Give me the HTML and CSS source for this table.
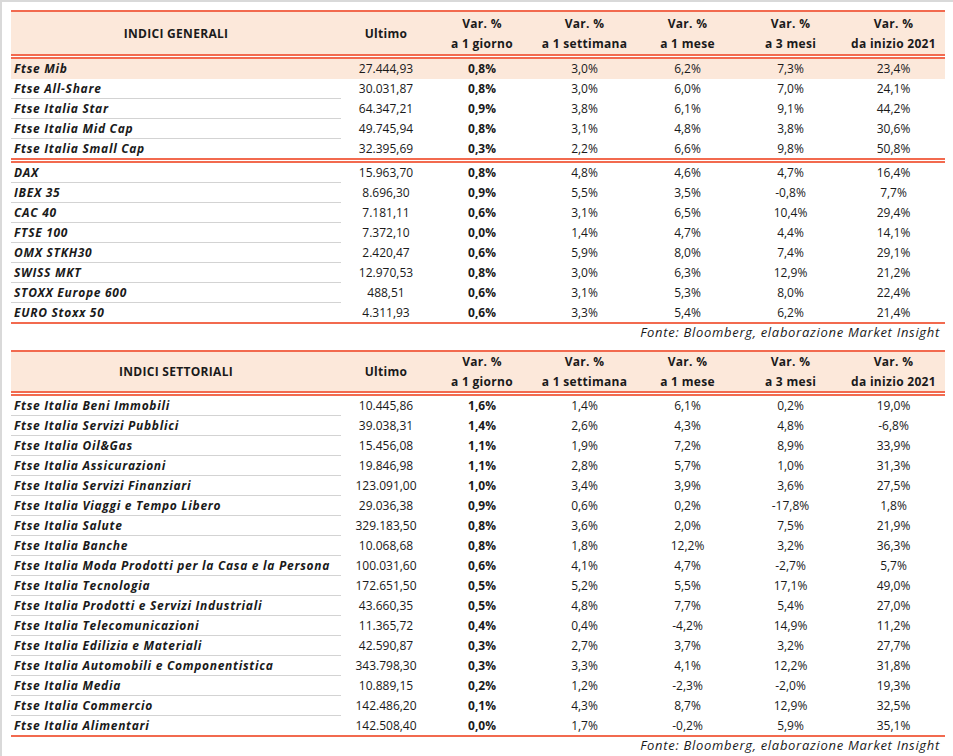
FILE: index.html
```html
<!DOCTYPE html>
<html lang="it">
<head>
<meta charset="utf-8">
<title>Indici</title>
<link rel="stylesheet" href="styles.css">
</head>
<body>
<div class="page">
<table class="tbl">
<colgroup><col class="c-name"><col class="c-last"><col class="c-day"><col class="c-var"><col class="c-var"><col class="c-var"><col class="c-var"></colgroup>
<thead>
<tr class="head1">
<th class="name-h">INDICI GENERALI</th><th>Ultimo</th><th>Var. %<br>a 1 giorno</th><th>Var. %<br>a 1 settimana</th><th>Var. %<br>a 1 mese</th><th>Var. %<br>a 3 mesi</th><th>Var. %<br>da inizio 2021</th>
</tr>
</thead>
<tbody>
<tr class="hl"><td class="name">Ftse Mib</td><td>27.444,93</td><td class="b">0,8%</td><td>3,0%</td><td>6,2%</td><td>7,3%</td><td>23,4%</td></tr>
<tr><td class="name">Ftse All-Share</td><td>30.031,87</td><td class="b">0,8%</td><td>3,0%</td><td>6,0%</td><td>7,0%</td><td>24,1%</td></tr>
<tr><td class="name">Ftse Italia Star</td><td>64.347,21</td><td class="b">0,9%</td><td>3,8%</td><td>6,1%</td><td>9,1%</td><td>44,2%</td></tr>
<tr><td class="name">Ftse Italia Mid Cap</td><td>49.745,94</td><td class="b">0,8%</td><td>3,1%</td><td>4,8%</td><td>3,8%</td><td>30,6%</td></tr>
<tr class="sep"><td class="name">Ftse Italia Small Cap</td><td>32.395,69</td><td class="b">0,3%</td><td>2,2%</td><td>6,6%</td><td>9,8%</td><td>50,8%</td></tr>
<tr><td class="name">DAX</td><td>15.963,70</td><td class="b">0,8%</td><td>4,8%</td><td>4,6%</td><td>4,7%</td><td>16,4%</td></tr>
<tr><td class="name">IBEX 35</td><td>8.696,30</td><td class="b">0,9%</td><td>5,5%</td><td>3,5%</td><td>-0,8%</td><td>7,7%</td></tr>
<tr><td class="name">CAC 40</td><td>7.181,11</td><td class="b">0,6%</td><td>3,1%</td><td>6,5%</td><td>10,4%</td><td>29,4%</td></tr>
<tr><td class="name">FTSE 100</td><td>7.372,10</td><td class="b">0,0%</td><td>1,4%</td><td>4,7%</td><td>4,4%</td><td>14,1%</td></tr>
<tr><td class="name">OMX STKH30</td><td>2.420,47</td><td class="b">0,6%</td><td>5,9%</td><td>8,0%</td><td>7,4%</td><td>29,1%</td></tr>
<tr><td class="name">SWISS MKT</td><td>12.970,53</td><td class="b">0,8%</td><td>3,0%</td><td>6,3%</td><td>12,9%</td><td>21,2%</td></tr>
<tr><td class="name">STOXX Europe 600</td><td>488,51</td><td class="b">0,6%</td><td>3,1%</td><td>5,3%</td><td>8,0%</td><td>22,4%</td></tr>
<tr class="end"><td class="name">EURO Stoxx 50</td><td>4.311,93</td><td class="b">0,6%</td><td>3,3%</td><td>5,4%</td><td>6,2%</td><td>21,4%</td></tr>
</tbody>
</table>
<p class="note">Fonte: Bloomberg, elaborazione Market Insight</p>

<table class="tbl">
<colgroup><col class="c-name"><col class="c-last"><col class="c-day"><col class="c-var"><col class="c-var"><col class="c-var"><col class="c-var"></colgroup>
<thead>
<tr class="head2">
<th class="name-h">INDICI SETTORIALI</th><th>Ultimo</th><th>Var. %<br>a 1 giorno</th><th>Var. %<br>a 1 settimana</th><th>Var. %<br>a 1 mese</th><th>Var. %<br>a 3 mesi</th><th>Var. %<br>da inizio 2021</th>
</tr>
</thead>
<tbody>
<tr><td class="name">Ftse Italia Beni Immobili</td><td>10.445,86</td><td class="b">1,6%</td><td>1,4%</td><td>6,1%</td><td>0,2%</td><td>19,0%</td></tr>
<tr><td class="name">Ftse Italia Servizi Pubblici</td><td>39.038,31</td><td class="b">1,4%</td><td>2,6%</td><td>4,3%</td><td>4,8%</td><td>-6,8%</td></tr>
<tr><td class="name">Ftse Italia Oil&amp;Gas</td><td>15.456,08</td><td class="b">1,1%</td><td>1,9%</td><td>7,2%</td><td>8,9%</td><td>33,9%</td></tr>
<tr><td class="name">Ftse Italia Assicurazioni</td><td>19.846,98</td><td class="b">1,1%</td><td>2,8%</td><td>5,7%</td><td>1,0%</td><td>31,3%</td></tr>
<tr><td class="name">Ftse Italia Servizi Finanziari</td><td>123.091,00</td><td class="b">1,0%</td><td>3,4%</td><td>3,9%</td><td>3,6%</td><td>27,5%</td></tr>
<tr><td class="name">Ftse Italia Viaggi e Tempo Libero</td><td>29.036,38</td><td class="b">0,9%</td><td>0,6%</td><td>0,2%</td><td>-17,8%</td><td>1,8%</td></tr>
<tr><td class="name">Ftse Italia Salute</td><td>329.183,50</td><td class="b">0,8%</td><td>3,6%</td><td>2,0%</td><td>7,5%</td><td>21,9%</td></tr>
<tr><td class="name">Ftse Italia Banche</td><td>10.068,68</td><td class="b">0,8%</td><td>1,8%</td><td>12,2%</td><td>3,2%</td><td>36,3%</td></tr>
<tr><td class="name">Ftse Italia Moda Prodotti per la Casa e la Persona</td><td>100.031,60</td><td class="b">0,6%</td><td>4,1%</td><td>4,7%</td><td>-2,7%</td><td>5,7%</td></tr>
<tr><td class="name">Ftse Italia Tecnologia</td><td>172.651,50</td><td class="b">0,5%</td><td>5,2%</td><td>5,5%</td><td>17,1%</td><td>49,0%</td></tr>
<tr><td class="name">Ftse Italia Prodotti e Servizi Industriali</td><td>43.660,35</td><td class="b">0,5%</td><td>4,8%</td><td>7,7%</td><td>5,4%</td><td>27,0%</td></tr>
<tr><td class="name">Ftse Italia Telecomunicazioni</td><td>11.365,72</td><td class="b">0,4%</td><td>0,4%</td><td>-4,2%</td><td>14,9%</td><td>11,2%</td></tr>
<tr><td class="name">Ftse Italia Edilizia e Materiali</td><td>42.590,87</td><td class="b">0,3%</td><td>2,7%</td><td>3,7%</td><td>3,2%</td><td>27,7%</td></tr>
<tr><td class="name">Ftse Italia Automobili e Componentistica</td><td>343.798,30</td><td class="b">0,3%</td><td>3,3%</td><td>4,1%</td><td>12,2%</td><td>31,8%</td></tr>
<tr><td class="name">Ftse Italia Media</td><td>10.889,15</td><td class="b">0,2%</td><td>1,2%</td><td>-2,3%</td><td>-2,0%</td><td>19,3%</td></tr>
<tr><td class="name">Ftse Italia Commercio</td><td>142.486,20</td><td class="b">0,1%</td><td>4,3%</td><td>8,7%</td><td>12,9%</td><td>32,5%</td></tr>
<tr class="end"><td class="name">Ftse Italia Alimentari</td><td>142.508,40</td><td class="b">0,0%</td><td>1,7%</td><td>-0,2%</td><td>5,9%</td><td>35,1%</td></tr>
</tbody>
</table>
<p class="note">Fonte: Bloomberg, elaborazione Market Insight</p>
</div>
</body>
</html>
```

FILE: styles.css
```css
html, body {
  margin: 0;
  background: #ffffff;
}
body {
  font-family: "Open Sans", "DejaVu Sans", sans-serif;
  font-size: 12px;
  color: #1a1a1a;
}
.page {
  border-top: 2px solid #d9d9d9;
  border-left: 2px solid #d9d9d9;
  padding: 8px 0 0 9px;
  height: 746px;
  overflow: hidden;
}
.tbl {
  width: 934px;
  table-layout: fixed;
  border-collapse: separate;
  border-spacing: 0;
}
.c-name { width: 330px; }
.c-last { width: 90px; }
.c-day { width: 102px; }
.c-var { width: 103px; }

.tbl th {
  background: #fce8da;
  background-clip: padding-box;
  border-top: 2px solid #f26a4f;
  border-bottom: 5px double #f26a4f;
  font-weight: 700;
  text-align: center;
  vertical-align: middle;
  padding: 0;
  letter-spacing: 0.3px;
}
.head1 th {
  height: 41px;
  line-height: 20px;
  padding-top: 1px;
}
.head2 th {
  line-height: 19.5px;
}
.tbl td {
  padding: 0;
  line-height: 19px;
  text-align: center;
  white-space: nowrap;
  border-bottom: 1px solid transparent;
}
.tbl td.name {
  text-align: left;
  padding-left: 3px;
  font-weight: 700;
  font-style: italic;
  letter-spacing: 0.7px;
  border-bottom-color: #d3d3d3;
}
.tbl td.b {
  font-weight: 700;
}
.tbl tr.hl td {
  background: #fce8da;
  border-bottom-color: #fce8da;
}
.tbl tr.sep td {
  border-bottom: 5px double #f26a4f;
}
.tbl tr.end td {
  border-bottom: 2px solid #f26a4f;
}
.note {
  margin: 0;
  width: 929px;
  height: 26px;
  padding-right: 5px;
  text-align: right;
  font-style: italic;
  font-size: 13px;
  letter-spacing: 0.7px;
  line-height: 17px;
}
```
